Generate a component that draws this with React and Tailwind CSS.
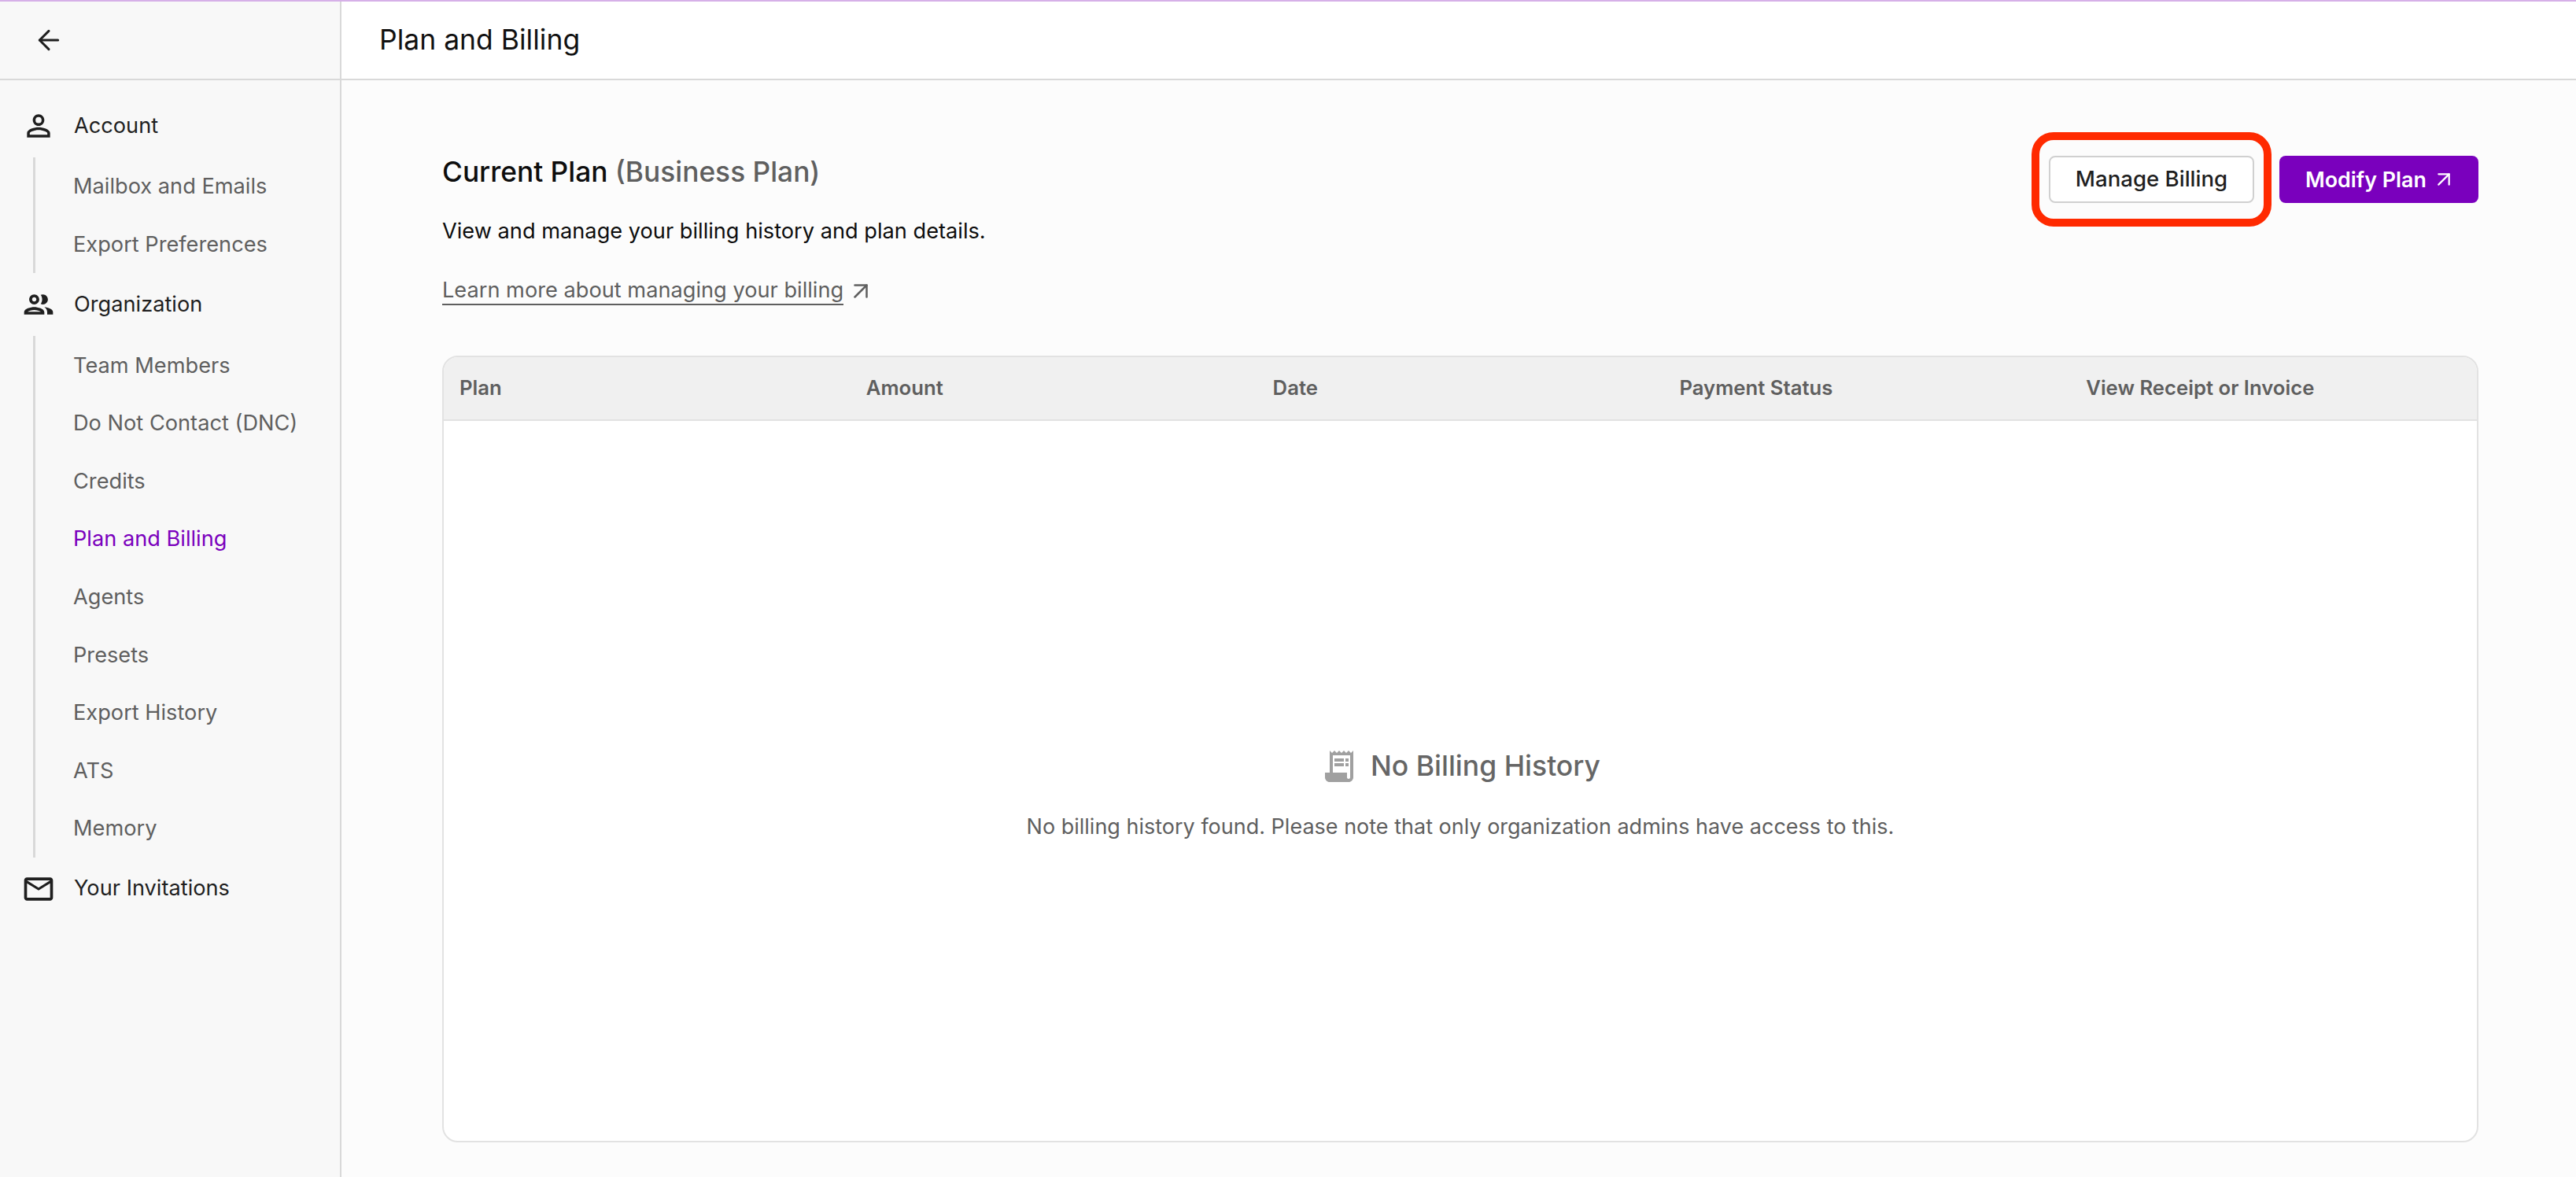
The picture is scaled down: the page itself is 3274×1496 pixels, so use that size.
import React from "react";
import { ArrowLeft, ArrowUpRight } from "lucide-react";
import { MdPersonOutline, MdOutlineGroup, MdMailOutline, MdReceiptLong } from "react-icons/md";

const accountItems = ["Mailbox and Emails", "Export Preferences"];
const orgItems = [
  "Team Members",
  "Do Not Contact (DNC)",
  "Credits",
  "Plan and Billing",
  "Agents",
  "Presets",
  "Export History",
  "ATS",
  "Memory",
];
const columns = ["Plan", "Amount", "Date", "Payment Status", "View Receipt or Invoice"];

const SideHeading = ({ icon: Icon, label, size = 44 }) => (
  <div className="flex items-center h-[80px] text-[#1f1f1f]">
    <div className="w-[94px] pl-[4px] flex justify-center shrink-0">
      <Icon size={size} />
    </div>
    <span>{label}</span>
  </div>
);

const SubItems = ({ items }) => (
  <div className="ml-[42px] border-l-[3px] border-[#d9d9d9] pl-[48px]">
    {items.map((item) => (
      <div
        key={item}
        className={`flex items-center h-[73.6px] pt-[2px] ${
          item === "Plan and Billing" ? "text-[#7a00bd]" : "text-[#5f5f5f]"
        }`}
      >
        {item}
      </div>
    ))}
  </div>
);

const App = () => {
  return (
    <div className="flex flex-col h-[1496px] overflow-hidden bg-[#fcfcfc] text-[27.2px] font-['Inter',sans-serif]">
      <div className="h-[2px] shrink-0 bg-[#d6b0e8]" />
      <div className="flex flex-1 min-h-0">
        {/* Sidebar */}
        <aside className="w-[434px] shrink-0 bg-[#f8f8f8] border-r-2 border-[#d9d9d9]">
          <div className="h-[100px] flex items-center pl-[42px] border-b-2 border-[#d9d9d9] text-[#1f1f1f]">
            <ArrowLeft size={40} strokeWidth={1.8} />
          </div>
          <nav className="pt-[18px]">
            <SideHeading icon={MdPersonOutline} label="Account" />
            <SubItems items={accountItems} />
            <SideHeading icon={MdOutlineGroup} label="Organization" />
            <SubItems items={orgItems} />
            <SideHeading icon={MdMailOutline} label="Your Invitations" />
          </nav>
        </aside>

        {/* Main */}
        <main className="flex-1 flex flex-col min-w-0">
          <header className="h-[100px] shrink-0 bg-white border-b-2 border-[#d9d9d9] flex items-center pl-[48px] text-[35.5px] text-[#111111]">
            Plan and Billing
          </header>
          <div className="flex-1 flex flex-col min-h-0 pt-[96px] pl-[128px] pr-[124px] pb-[44px]">
            <div className="flex justify-between items-start">
              <div>
                <h1 className="text-[35.3px] leading-[42px] font-medium text-[#0d0d0d]">
                  Current Plan <span className="text-[#5f5f5f]">(Business Plan)</span>
                </h1>
                <p className="mt-[33px] leading-[42px] text-[#0d0d0d]">
                  View and manage your billing history and plan details.
                </p>
                <a className="mt-[36px] flex items-center leading-[42px] text-[#5f5f5f]">
                  <span className="border-b-2 border-[#5f5f5f] leading-[35px]">
                    Learn more about managing your billing
                  </span>
                  <ArrowUpRight size={36} strokeWidth={1.7} className="ml-[4px]" />
                </a>
              </div>
              <div className="flex gap-[32px]">
                <div className="relative">
                  <button className="h-[60px] w-[261px] bg-white border-2 border-[#d0d0d0] rounded-[8px] text-[27.6px] font-medium text-[#1f1f1f]">
                    Manage Billing
                  </button>
                  <div className="absolute -inset-x-[22px] -inset-y-[30px] border-[10px] border-[#ff2a00] rounded-[28px] pointer-events-none" />
                </div>
                <button className="h-[60px] w-[253px] pl-[33px] bg-[#7a00bd] rounded-[8px] text-[26.8px] font-semibold text-white flex items-center gap-[6px]">
                  Modify Plan
                  <ArrowUpRight size={32} strokeWidth={1.7} />
                </button>
              </div>
            </div>

            <div className="mt-[64px] flex-1 flex flex-col min-h-0 bg-white border-2 border-[#e2e2e2] rounded-[20px] overflow-hidden">
              <div className="h-[81px] shrink-0 grid grid-cols-5 items-center bg-[#f0f0f0] border-b-2 border-[#e2e2e2] text-[25.7px] font-semibold text-[#5f5f5f]">
                {columns.map((col) => (
                  <div key={col} className="pl-[20px]">{col}</div>
                ))}
              </div>
              <div className="flex-1 flex flex-col items-center pt-[412px]">
                <div className="flex items-center gap-[16px] text-[#666666]">
                  <MdReceiptLong size={48} className="text-[#a0a0a0]" />
                  <span className="text-[35.5px] font-medium">No Billing History</span>
                </div>
                <p className="mt-[31px] text-[27px] text-[#5f5f5f]">
                  No billing history found. Please note that only organization admins have access to this.
                </p>
              </div>
            </div>
          </div>
        </main>
      </div>
    </div>
  );
};

export default App;
